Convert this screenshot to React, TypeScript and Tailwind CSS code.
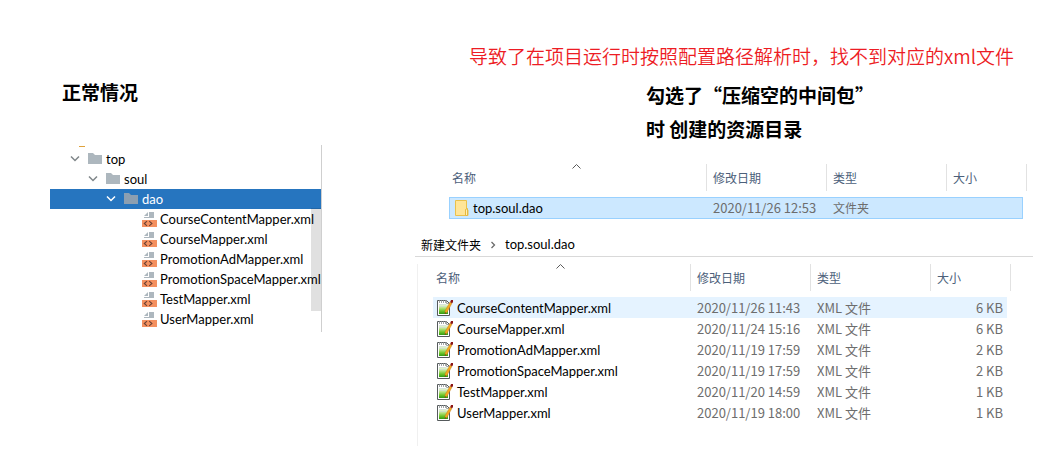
import React from "react";

type FileRow = { name: string; date: string; type: string; size: string };

const files: FileRow[] = [
  { name: "CourseContentMapper.xml", date: "2020/11/26 11:43", type: "XML 文件", size: "6 KB" },
  { name: "CourseMapper.xml", date: "2020/11/24 15:16", type: "XML 文件", size: "6 KB" },
  { name: "PromotionAdMapper.xml", date: "2020/11/19 17:59", type: "XML 文件", size: "2 KB" },
  { name: "PromotionSpaceMapper.xml", date: "2020/11/19 17:59", type: "XML 文件", size: "2 KB" },
  { name: "TestMapper.xml", date: "2020/11/20 14:59", type: "XML 文件", size: "1 KB" },
  { name: "UserMapper.xml", date: "2020/11/19 18:00", type: "XML 文件", size: "1 KB" },
];

const folders = [
  { name: "top", indent: "pl-5", selected: false },
  { name: "soul", indent: "pl-[38px]", selected: false },
  { name: "dao", indent: "pl-14", selected: true },
];

function TreeChevron({ selected }: { selected: boolean }) {
  return (
    <svg className="mr-2 shrink-0" width="10" height="10" viewBox="0 0 10 10" fill="none" aria-hidden="true">
      <path d="M1 2.5l4 4 4-4" stroke={selected ? "#ffffff" : "#7f8689"} strokeWidth="1.5" />
    </svg>
  );
}

function TreeFolder({ selected }: { selected: boolean }) {
  return (
    <svg className="mr-1 shrink-0" width="14" height="12" viewBox="0 0 14 12" aria-hidden="true">
      <path d="M0 0h5l2 2h7v9H0z" fill={selected ? "#8c9fb1" : "#adb7be"} />
    </svg>
  );
}

function XmlIcon() {
  return (
    <svg className="mr-[3px] shrink-0" width="15" height="16" viewBox="0 0 15 16" aria-hidden="true">
      <path d="M7 1h5v6H2V6h5z" fill="#adb7be" />
      <path d="M6 1v4H2z" fill="#adb7be" />
      <rect y="9" width="15" height="7" fill="#f4905f" />
      <path d="M5 10.2L2.3 12.5 5 14.8M7.2 10.2l2.7 2.3-2.7 2.3" fill="none" stroke="#6b4034" strokeWidth="1.1" />
    </svg>
  );
}

function FolderIcon() {
  return (
    <svg className="shrink-0" width="16" height="18" viewBox="0 0 16 18" aria-hidden="true">
      <path d="M1.5 1.5h11v8.5l1.5 1v5.5H1.5z" fill="#ffe598" stroke="#eac14c" />
      <path d="M11.5 16.5v-6l2-1v7z" fill="#fff0b8" stroke="#e6b93f" />
    </svg>
  );
}

function NotepadIcon() {
  return (
    <svg className="shrink-0" width="16" height="16" viewBox="0 0 16 16" aria-hidden="true">
      <defs>
        <linearGradient id="page-green" x1="0" y1="0" x2="0" y2="1">
          <stop offset="0" stopColor="#f4faea" />
          <stop offset="0.3" stopColor="#c9ea9c" />
          <stop offset="0.7" stopColor="#6fc62b" />
          <stop offset="1" stopColor="#2f9a12" />
        </linearGradient>
      </defs>
      <path d="M.5 .5h9l3 3v12H.5z" fill="#ffffff" stroke="#555a5c" />
      <path d="M9.5 .5v3h3" fill="none" stroke="#8b9092" strokeWidth=".8" />
      <path d="M2 4h9v10H2z" fill="url(#page-green)" />
      <path d="M2 4.5h7M2 6.5h7" stroke="#c9d6dc" strokeWidth=".6" />
      <path d="M2.5 0v3M4.5 0v3M6.5 0v3M8.5 0v3" stroke="#8b9092" strokeWidth=".8" />
      <path d="M13 2l2 1.2L10.2 12 8 13.8l.1-3z" fill="#f5a81f" stroke="#b8741a" strokeWidth=".4" />
      <path d="M13.2 2L14 0h2v2.2l-1.2 1z" fill="#8c1414" />
      <path d="M7.8 14l.2-1.7 1.1.7z" fill="#3a2a10" />
    </svg>
  );
}

function HeaderCell({ label, sorted, last }: { label: string; sorted?: boolean; last?: boolean }) {
  return (
    <th className="p-0 pb-[6px] text-left font-normal" colSpan={last ? 2 : 1} scope="col">
      <button
        type="button"
        className={`relative block h-[27px] w-full border-r border-[#e2e2e2] text-left text-[12px] leading-[27px] text-[#4c607a] ${
          sorted ? "pl-[3px]" : "pl-[6px]"
        }`}
      >
        {label}
        {sorted && (
          <svg className="absolute top-0 left-1/2 -ml-[5px]" width="9" height="5" viewBox="0 0 9 5" fill="none" aria-hidden="true">
            <path d="M.5 4.5l4-4 4 4" stroke="#5a5a5a" />
          </svg>
        )}
      </button>
    </th>
  );
}

function FileTable({ label, children }: { label: string; children: React.ReactNode }) {
  return (
    <table aria-label={label} className="w-full table-fixed border-separate border-spacing-0">
      <colgroup>
        <col />
        <col className="w-[120px]" />
        <col className="w-[120px]" />
        <col className="w-[76px]" />
        <col className="w-1" />
      </colgroup>
      <thead>
        <tr>
          <HeaderCell label="名称" sorted />
          <HeaderCell label="修改日期" />
          <HeaderCell label="类型" />
          <HeaderCell label="大小" last />
        </tr>
      </thead>
      <tbody>{children}</tbody>
    </table>
  );
}

export default function App() {
  return (
    <div className="flex min-h-screen bg-white pr-[11px] pl-[50px] font-['Noto_Sans_CJK_SC',sans-serif] text-[12px] text-black">
      <section className="w-[272px] shrink-0 pt-[77px]">
        <h2 className="pl-3 text-[19px] leading-[30px] font-bold">正常情况</h2>
        <div className="relative mt-[38px] overflow-hidden border-r border-[#cfcfcf] pt-1 pb-[3px] font-['Lato','Noto_Sans_CJK_SC',sans-serif]">
          <span className="absolute top-px left-[29px] h-px w-[6px] bg-[#dfa23c]" />
          <ul>
            {folders.map((f) => (
              <li key={f.name}>
                <button
                  type="button"
                  className={`flex h-5 w-full items-center text-left text-[13px] leading-5 ${f.indent} ${
                    f.selected ? "bg-[#2675bf] text-white" : ""
                  }`}
                >
                  <TreeChevron selected={f.selected} />
                  <TreeFolder selected={f.selected} />
                  {f.name}
                </button>
              </li>
            ))}
            {files.map((f) => (
              <li key={f.name}>
                <button type="button" className="flex h-5 w-full items-center pl-[92px] text-left text-[13px] leading-5 whitespace-nowrap">
                  <XmlIcon />
                  {f.name}
                </button>
              </li>
            ))}
          </ul>
          <span className="absolute top-[63px] right-0 h-[103px] w-[10px] bg-black/12" />
        </div>
      </section>

      <section className="ml-[93px] min-w-0 flex-1 pt-[41px]">
        <p className="pl-[54px] text-[19px] leading-[30px] font-[350] whitespace-nowrap text-[#ed1c24]">
          导致了在项目运行时按照配置路径解析时，找不到对应的xml文件
        </p>
        <h2 className="mt-[7px] pl-[231px] text-[19px] leading-[34px] font-bold whitespace-nowrap">
          勾选了“压缩空的中间包”
          <br />时 创建的资源目录
        </h2>

        <div className="mt-[18px] mr-[6px] ml-[34px]">
          <FileTable label="资源目录">
            <tr className="h-[22px] bg-[#cce8ff] leading-5 text-[#6d6d6d]">
              <td className="border-y border-l border-[#99d1ff] p-0">
                <div className="flex items-center gap-[3px] pl-1 font-['Lato','Noto_Sans_CJK_SC',sans-serif] text-[13px] text-black">
                  <FolderIcon />
                  top.soul.dao
                </div>
              </td>
              <td className="border-y border-[#99d1ff] p-0 pl-[6px] text-[13px]">2020/11/26 12:53</td>
              <td className="border-y border-[#99d1ff] p-0 pl-[6px]">文件夹</td>
              <td className="border-y border-r border-[#99d1ff] p-0" />
              <td className="bg-white p-0" />
            </tr>
          </FileTable>
        </div>

        <nav aria-label="路径" className="mt-[15px] flex h-[23px] items-center gap-2 border-b border-[#d9d9d9] pl-[6px]">
          <a href="#parent">新建文件夹</a>
          <svg width="8" height="8" viewBox="0 0 8 8" fill="none" aria-hidden="true">
            <path d="M2.5 1l3 3-3 3" stroke="#6a6a6a" strokeWidth="1.3" />
          </svg>
          <a href="#current" className="font-['Lato','Noto_Sans_CJK_SC',sans-serif] text-[13px]">top.soul.dao</a>
        </nav>

        <div className="mt-[7px] mr-[22px] ml-[2px] border-l border-[#f0f0f0] pb-[23px] pl-[15px]">
          <FileTable label="top.soul.dao">
            {files.map((f, i) => (
              <tr key={f.name} className={`h-[21px] text-[13px] leading-5 text-[#6d6d6d] ${i === 0 ? "bg-[#e5f3ff]" : ""}`}>
                <td className="p-0">
                  <div className="flex items-center gap-1 pl-1 font-['Lato','Noto_Sans_CJK_SC',sans-serif] text-[13px] text-black">
                    <NotepadIcon />
                    {f.name}
                  </div>
                </td>
                <td className="p-0 pl-[6px]">{f.date}</td>
                <td className="p-0 pl-[6px]">{f.type}</td>
                <td className="p-0 pr-1 text-right">{f.size}</td>
                <td className="bg-white p-0" />
              </tr>
            ))}
          </FileTable>
        </div>
      </section>
    </div>
  );
}
